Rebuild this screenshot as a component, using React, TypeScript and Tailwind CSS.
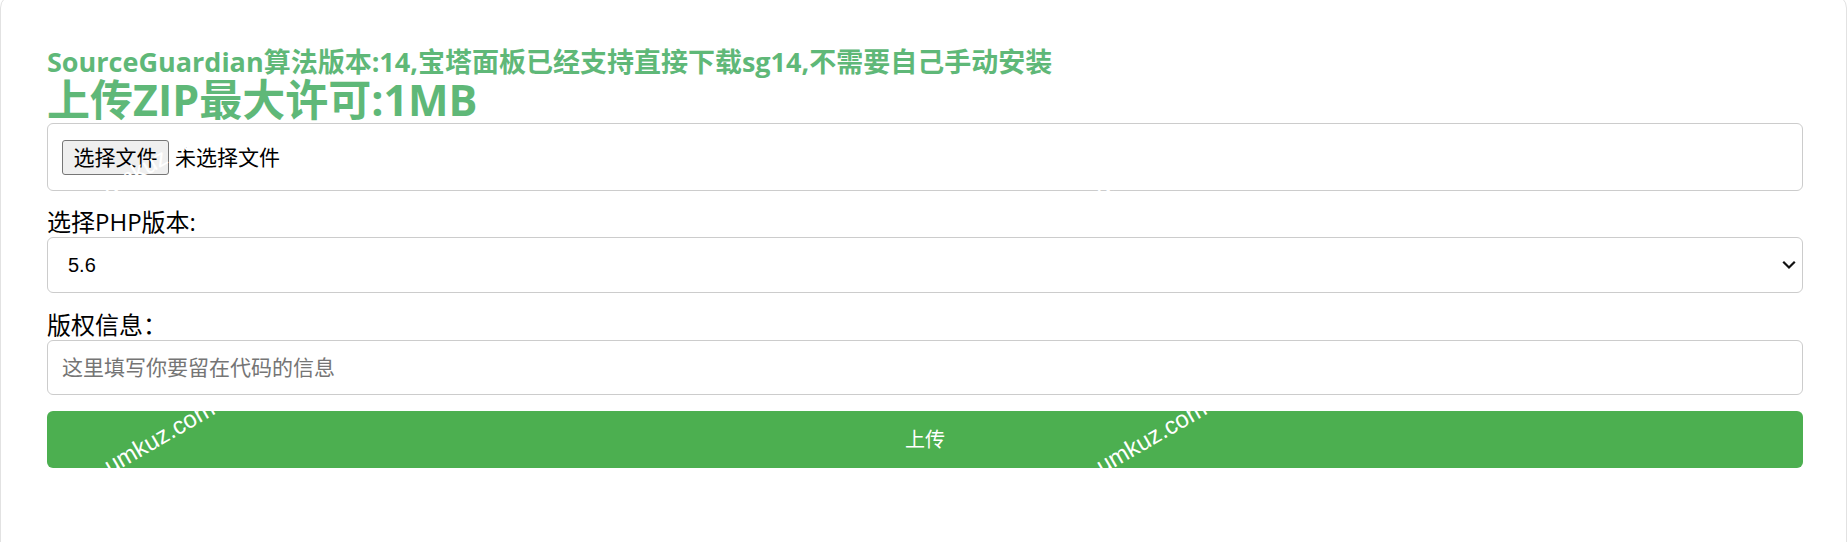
import React from "react";

function Watermark({ className }: { className: string }) {
  return (
    <span
      className={
        "pointer-events-none absolute select-none whitespace-nowrap text-[24px] leading-[26px] text-white font-['Liberation_Sans',sans-serif] rotate-[-30deg] " +
        className
      }
    >
      umkuz.com
    </span>
  );
}

export default function App() {
  return (
    <div className="relative h-[542px] w-[1848px] overflow-hidden bg-white font-['Open_Sans','Noto_Sans_CJK_SC',sans-serif] text-black">
      <div className="mt-[-6px] h-[620px] w-[1847px] rounded-[14px] border border-[#e2e2e2] pl-[46px] pr-[43px] pt-[51px]">
        <h1 className="text-[27px] font-bold leading-[31px] text-[#5FB878] whitespace-nowrap">
          SourceGuardian算法版本:14,宝塔面板已经支持直接下载sg14,不需要自己手动安装
        </h1>
        <h2 className="text-[43px] font-bold leading-[46px] text-[#5FB878] whitespace-nowrap">
          上传ZIP最大许可:1MB
        </h2>

        <div className="flex h-[68px] items-center rounded-[6px] border border-[#cccccc] px-[14px]">
          <span className="flex h-[35px] w-[107px] items-center justify-center rounded-[3px] border border-[#767676] bg-[#efefef] text-[21px] leading-none">
            选择文件
          </span>
          <span className="ml-[6px] text-[21px] leading-none">未选择文件</span>
        </div>

        <div className="mt-[16px] text-[24px] leading-[30px]">选择PHP版本:</div>
        <div className="relative flex h-[56px] items-center rounded-[6px] border border-[#cccccc] pl-[20px]">
          <span className="font-['Liberation_Sans',sans-serif] text-[20px] leading-none">5.6</span>
          <svg
            className="absolute right-[6px] top-1/2 -translate-y-1/2"
            width="14"
            height="10"
            viewBox="0 0 14 10"
            fill="none"
          >
            <path d="M2 2.5l5 5 5-5" stroke="#111" strokeWidth="2.2" strokeLinecap="square" />
          </svg>
        </div>

        <div className="mt-[17px] text-[24px] leading-[30px]">版权信息：</div>
        <div className="flex h-[55px] items-center rounded-[6px] border border-[#cccccc] pl-[14px]">
          <span className="text-[21px] leading-none text-[#757575]">这里填写你要留在代码的信息</span>
        </div>

        <div className="mt-[16px] flex h-[57px] items-center justify-center rounded-[6px] bg-[#4CAF50] text-[20px] leading-none text-white">
          上传
        </div>
      </div>

      <Watermark className="left-[96px] top-[147px]" />
      <Watermark className="left-[1088px] top-[147px]" />
      <Watermark className="left-[98px] top-[424px]" />
      <Watermark className="left-[1090px] top-[424px]" />
    </div>
  );
}
